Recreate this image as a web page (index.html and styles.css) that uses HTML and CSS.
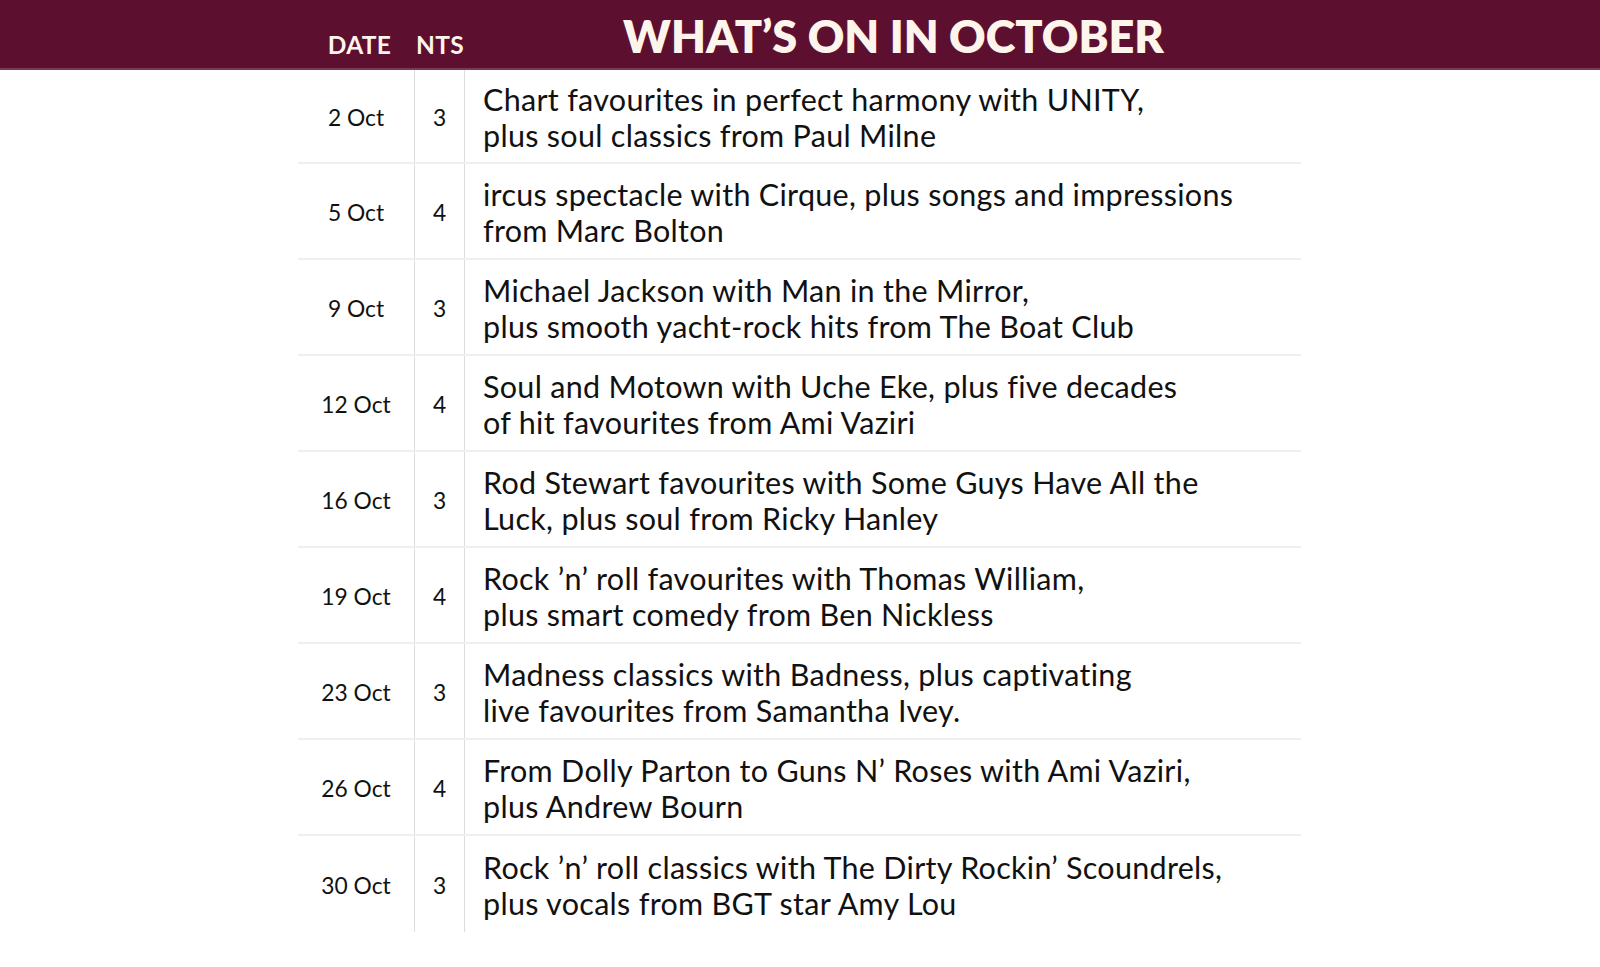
FILE: index.html
```html
<!DOCTYPE html>
<html>
<head>
<meta charset="utf-8">
<link rel="stylesheet" href="styles.css">
</head>
<body>
<header class="bar">
  <div class="bar-inner">
    <div class="hcol hdate">DATE</div>
    <div class="hcol hnts">NTS</div>
    <h1 class="title">WHAT’S ON IN OCTOBER</h1>
  </div>
</header>
<main class="table">
  <div class="row"><div class="date">2 Oct</div><div class="nts">3</div><div class="desc">Chart favourites in perfect harmony with UNITY,<br>plus soul classics from Paul Milne</div></div>
  <div class="row"><div class="date">5 Oct</div><div class="nts">4</div><div class="desc">ircus spectacle with Cirque, plus songs and impressions<br>from Marc Bolton</div></div>
  <div class="row"><div class="date">9 Oct</div><div class="nts">3</div><div class="desc">Michael Jackson with Man in the Mirror,<br>plus smooth yacht-rock hits from The Boat Club</div></div>
  <div class="row"><div class="date">12 Oct</div><div class="nts">4</div><div class="desc">Soul and Motown with Uche Eke, plus five decades<br>of hit favourites from Ami Vaziri</div></div>
  <div class="row"><div class="date">16 Oct</div><div class="nts">3</div><div class="desc">Rod Stewart favourites with Some Guys Have All the<br>Luck, plus soul from Ricky Hanley</div></div>
  <div class="row"><div class="date">19 Oct</div><div class="nts">4</div><div class="desc">Rock ’n’ roll favourites with Thomas William,<br>plus smart comedy from Ben Nickless</div></div>
  <div class="row"><div class="date">23 Oct</div><div class="nts">3</div><div class="desc">Madness classics with Badness, plus captivating<br>live favourites from Samantha Ivey.</div></div>
  <div class="row"><div class="date">26 Oct</div><div class="nts">4</div><div class="desc">From Dolly Parton to Guns N’ Roses with Ami Vaziri,<br>plus Andrew Bourn</div></div>
  <div class="row last"><div class="date">30 Oct</div><div class="nts">3</div><div class="desc">Rock ’n’ roll classics with The Dirty Rockin’ Scoundrels,<br>plus vocals from BGT star Amy Lou</div></div>
</main>
</body>
</html>
```
FILE: styles.css
```css
html, body {
  margin: 0;
  padding: 0;
  background: #ffffff;
}
body {
  font-family: Lato, "Open Sans", sans-serif;
  color: #111111;
  width: 1600px;
  height: 967px;
  overflow: hidden;
}
.bar {
  background: #5c0f2f;
  height: 70px;
  box-shadow: inset 0 -2px 0 #7a3a55;
}
.bar-inner {
  display: flex;
  align-items: flex-end;
  height: 70px;
  padding-left: 298px;
  box-sizing: border-box;
}
.hcol {
  color: #fdf4ec;
  font-weight: 700;
  font-size: 24.5px;
  letter-spacing: 0.3px;
  text-align: center;
  padding-bottom: 13px;
  line-height: 1;
}
.hdate { width: 117px; padding-left: 6px; box-sizing: border-box; }
.hnts { width: 50px; }
.title {
  margin: 0 0 0 158px;
  color: #fdf4ec;
  font-weight: 800;
  font-size: 45px;
  line-height: 1;
  padding-bottom: 11px;
  letter-spacing: 0;
}
.table {
  margin-left: 298px;
  width: 1003px;
}
.row {
  display: grid;
  grid-template-columns: 117px 50px 1fr;
  height: 96px;
  border-bottom: 2px solid #efefef;
  box-sizing: border-box;
}
.row:first-child { height: 94px; }
.row.last { border-bottom: none; }
.date, .nts {
  display: flex;
  align-items: center;
  justify-content: center;
  font-size: 22.8px;
  border-right: 1px solid #dcdcdc;
  color: #111;
  padding-top: 1px;
}
.desc {
  display: flex;
  align-items: center;
  padding-left: 18px;
  padding-top: 1px;
  font-size: 30.5px;
  letter-spacing: 0.3px;
  line-height: 36px;
  color: #111;
}
```
